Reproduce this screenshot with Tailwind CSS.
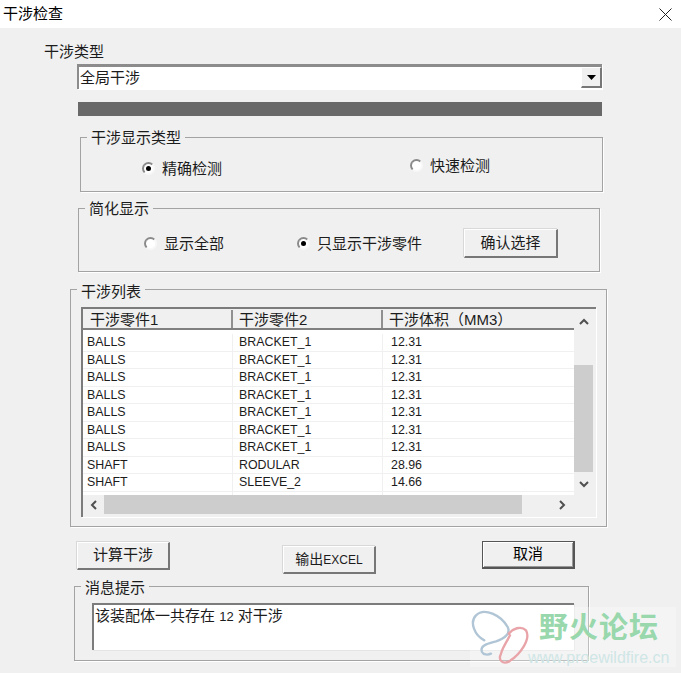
<!DOCTYPE html>
<html lang="zh-CN">
<head>
    <meta charset="UTF-8">
    <title>干涉检查</title>
    <script src="https://cdn.jsdelivr.net/npm/@tailwindcss/browser@4"></script>
</head>
<body class="relative w-[681px] h-[673px] overflow-hidden bg-[#f0f0f0] text-[15px] text-[#1c1c1c] font-['Liberation_Sans','Noto_Sans_CJK_SC',sans-serif]">

    <!-- title bar -->
    <div class="h-[28px] bg-white flex items-center justify-between pl-[3px] pr-[9px]">
        <span class="leading-[24px] text-black">干涉检查</span>
        <svg width="13" height="13" viewBox="0 0 13 13" class="stroke-[#222]" fill="none"><path d="M0.5 0.5L12.5 12.5M12.5 0.5L0.5 12.5"/></svg>
    </div>

    <div class="ml-[44px] mt-[13px] h-[21px] leading-[21px]">干涉类型</div>

    <!-- combo box -->
    <div class="ml-[77px] mt-[2px] w-[525px] h-[25px] bg-white border-t-[3px] border-l-[2px] border-t-[#8c8c8c] border-l-[#8c8c8c] shadow-[1px_1px_0_#fff] flex justify-between">
        <span class="pl-[1px] leading-[22px]">全局干涉</span>
        <div class="w-[21px] h-[21px] bg-[#f0f0f0] border-r-2 border-b-2 border-r-[#777] border-b-[#777] border-t border-l border-t-white border-l-white flex items-center justify-center">
            <svg width="9" height="5" viewBox="0 0 9 5"><path d="M0 0H9L4.5 5Z" fill="#000"/></svg>
        </div>
    </div>

    <!-- progress bar -->
    <div class="ml-[78px] mt-[13px] w-[524px] h-[14px] bg-[#696969]"></div>

    <!-- display type -->
    <div class="relative ml-[80px] mt-[21px] w-[523px] h-[55px] border border-[#a3a3a3] shadow-[1px_1px_0_#fff] flex items-start">
        <span class="absolute left-[6px] -top-[9px] px-[4px] bg-[#f0f0f0] leading-[17px]">干涉显示类型</span>
        <div class="ml-[61px] mt-[20px] flex items-center gap-[7px]">
            <span class="w-[13px] h-[13px] rounded-full bg-white border-2 border-t-[#8a8a8a] border-l-[#8a8a8a] border-r-[#f8f8f8] border-b-[#f8f8f8] flex items-center justify-center"><span class="w-[5px] h-[5px] rounded-full bg-black"></span></span>
            <span class="leading-[21px]">精确检测</span>
        </div>
        <div class="ml-[188px] mt-[17px] flex items-center gap-[7px]">
            <span class="w-[13px] h-[13px] rounded-full bg-white border-2 border-t-[#8a8a8a] border-l-[#8a8a8a] border-r-[#f8f8f8] border-b-[#f8f8f8]"></span>
            <span class="leading-[21px]">快速检测</span>
        </div>
    </div>

    <!-- simplified display -->
    <div class="relative ml-[78px] mt-[16px] w-[522px] h-[64px] border border-[#a3a3a3] shadow-[1px_1px_0_#fff] flex items-start">
        <span class="absolute left-[6px] -top-[9px] px-[4px] bg-[#f0f0f0] leading-[17px]">简化显示</span>
        <div class="ml-[65px] mt-[24px] flex items-center gap-[7px]">
            <span class="w-[13px] h-[13px] rounded-full bg-white border-2 border-t-[#8a8a8a] border-l-[#8a8a8a] border-r-[#f8f8f8] border-b-[#f8f8f8]"></span>
            <span class="leading-[21px]">显示全部</span>
        </div>
        <div class="ml-[73px] mt-[24px] flex items-center gap-[7px]">
            <span class="w-[13px] h-[13px] rounded-full bg-white border-2 border-t-[#8a8a8a] border-l-[#8a8a8a] border-r-[#f8f8f8] border-b-[#f8f8f8] flex items-center justify-center"><span class="w-[5px] h-[5px] rounded-full bg-black"></span></span>
            <span class="leading-[21px]">只显示干涉零件</span>
        </div>
        <button class="ml-[42px] mt-[20px] w-[94px] h-[29px] bg-[#f0f0f0] border-t border-l border-t-white border-l-white border-r-2 border-b-2 border-r-[#777] border-b-[#777] shadow-[-1px_-1px_0_#d8d8d8]">确认选择</button>
    </div>

    <!-- list -->
    <div class="relative ml-[70px] mt-[17px] w-[537px] h-[238px] border border-[#a3a3a3] shadow-[1px_1px_0_#fff] pl-[10px] pt-[17px]">
        <span class="absolute left-[6px] -top-[7px] px-[4px] bg-[#f0f0f0] leading-[17px]">干涉列表</span>
        <div class="w-[515px] h-[210px] border-t-2 border-l-2 border-t-[#7c7c7c] border-l-[#7c7c7c] shadow-[1px_1px_0_#fff]">
            <div class="flex h-[186px]">
                <div class="w-[491px]">
                    <div class="flex h-[21px] pt-px border-b-2 border-b-[#808080] leading-[20px]">
                        <div class="w-[150px] pl-[7px] border-r-2 border-r-[#909090]">干涉零件1</div>
                        <div class="w-[150px] pl-[6px] border-r-2 border-r-[#909090]">干涉零件2</div>
                        <div class="flex-1 pl-[6px]">干涉体积（MM3）</div>
                    </div>
                    <div id="rows" class="h-[165px] bg-white pt-[4px] text-[12.4px] overflow-hidden"></div>
                </div>
                <div class="w-[19px] flex flex-col items-center">
                    <div class="h-[24px] flex items-center justify-center">
                        <svg width="10" height="7" viewBox="0 0 10 7" fill="none" stroke="#505050" stroke-width="2"><path d="M1 6L5 2L9 6"/></svg>
                    </div>
                    <div class="mt-[32px] w-full h-[107px] bg-[#cdcdcd]"></div>
                    <div class="mt-[5px] h-[14px] flex items-center justify-center">
                        <svg width="10" height="7" viewBox="0 0 10 7" fill="none" stroke="#505050" stroke-width="2"><path d="M1 1L5 5L9 1"/></svg>
                    </div>
                </div>
            </div>
            <div class="flex h-[19px] items-stretch">
                <div class="w-[21px] flex items-center justify-center">
                    <svg width="7" height="10" viewBox="0 0 7 10" fill="none" stroke="#505050" stroke-width="2"><path d="M6 1L2 5L6 9"/></svg>
                </div>
                <div class="w-[418px] bg-[#cdcdcd]"></div>
                <div class="w-[71px] pl-[37px] flex items-center">
                    <svg width="7" height="10" viewBox="0 0 7 10" fill="none" stroke="#505050" stroke-width="2"><path d="M1 1L5 5L1 9"/></svg>
                </div>
            </div>
        </div>
    </div>

    <!-- buttons -->
    <div class="flex items-start ml-[77px] mt-[14px] h-[33px]">
        <button class="w-[93px] h-[28px] mt-px bg-[#f0f0f0] border-t border-l border-t-white border-l-white border-r-2 border-b-2 border-r-[#777] border-b-[#777] shadow-[-1px_-1px_0_#d8d8d8]">计算干涉</button>
        <button class="ml-[113px] mt-[5px] w-[93px] h-[28px] bg-[#f0f0f0] border-t border-l border-t-white border-l-white border-r-2 border-b-2 border-r-[#777] border-b-[#777] shadow-[-1px_-1px_0_#d8d8d8] text-[14px]">输出<span class="text-[12px]">EXCEL</span></button>
        <button class="ml-[106px] w-[93px] h-[28px] bg-[#f0f0f0] border border-[#555] border-r-2 border-b-2 shadow-[inset_1px_1px_0_#fff,inset_-1px_-1px_0_#999] text-black">取消</button>
    </div>

    <!-- message -->
    <div class="relative ml-[74px] mt-[12px] w-[515px] h-[75px] border border-[#a3a3a3] shadow-[1px_1px_0_#fff] pl-[17px] pt-[16px]">
        <span class="absolute left-[6px] -top-[8px] px-[4px] bg-[#f0f0f0] leading-[17px]">消息提示</span>
        <div class="w-[482px] h-[47px] bg-white border-t-2 border-l-2 border-t-[#7c7c7c] border-l-[#7c7c7c] pl-[1px] pt-[1px] leading-[20px] shadow-[1px_1px_0_#e4e4e4]">该装配体一共存在 <span class="text-[13px]">12</span> 对干涉</div>
    </div>

    <!-- forum watermark -->
    <div class="absolute left-[470px] top-[607px] w-[206px] h-[60px] bg-white/30">
        <svg class="absolute -left-[4px] -top-[5px]" width="80" height="70" viewBox="0 0 240 210" fill="none" stroke-linecap="round">
            <path d="M55 115C25 100 10 60 30 40C55 15 105 40 125 75C135 95 115 110 90 118C65 125 40 130 48 150C52 158 65 160 75 155" stroke="#b0c5d5" stroke-width="7"/>
            <path d="M128 95C140 80 165 70 180 85C195 110 165 155 130 178C110 188 95 175 105 155C110 135 125 115 132 100" stroke="#e9a4a9" stroke-width="7"/>
        </svg>
        <div class="absolute left-[69px] top-[3px] text-[29px] leading-[36px] font-bold tracking-[1px] text-[#98d8ac] whitespace-nowrap">野火论坛</div>
        <div class="absolute left-[58px] top-[41px] text-[16px] leading-[20px] text-[#cfe6e6] whitespace-nowrap">www.proewildfire.cn</div>
    </div>

    <script>
        const data = [
            ['BALLS', 'BRACKET_1', '12.31'],
            ['BALLS', 'BRACKET_1', '12.31'],
            ['BALLS', 'BRACKET_1', '12.31'],
            ['BALLS', 'BRACKET_1', '12.31'],
            ['BALLS', 'BRACKET_1', '12.31'],
            ['BALLS', 'BRACKET_1', '12.31'],
            ['BALLS', 'BRACKET_1', '12.31'],
            ['SHAFT', 'RODULAR', '28.96'],
            ['SHAFT', 'SLEEVE_2', '14.66'],
            ['', '', '']
        ];
        const rows = document.getElementById('rows');
        data.forEach(row => {
            const el = document.createElement('div');
            el.className = 'flex h-[17.5px] leading-[17px] border-b border-b-[#f0f0f0]';
            el.innerHTML = `
                <div class="w-[150px] pl-[4px] border-r border-r-[#f0f0f0]">${row[0]}</div>
                <div class="w-[150px] pl-[6px] border-r border-r-[#f0f0f0]">${row[1]}</div>
                <div class="flex-1 pl-[8px]">${row[2]}</div>
            `;
            rows.appendChild(el);
        });
    </script>
</body>
</html>
